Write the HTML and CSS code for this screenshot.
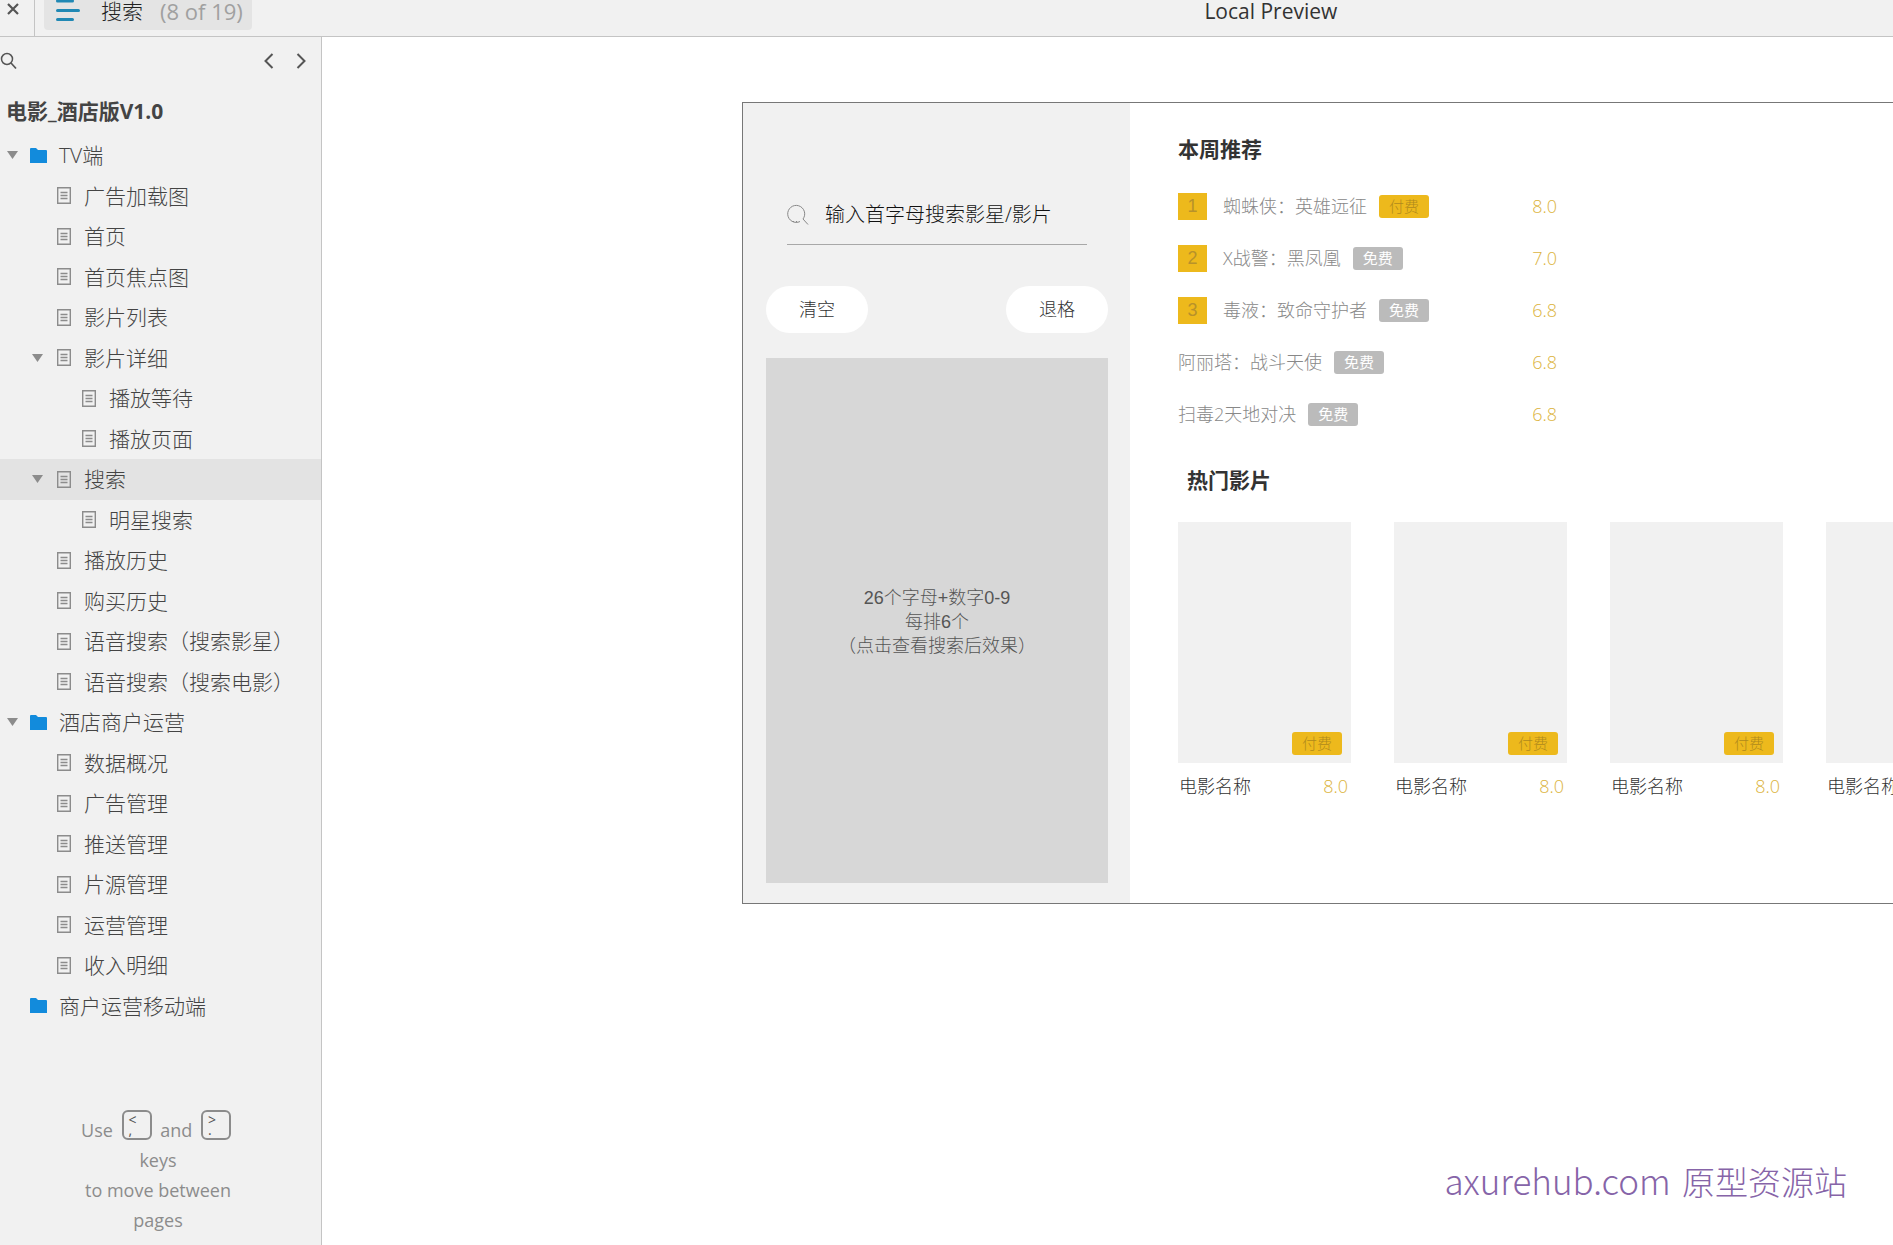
FILE: index.html
```html
<!DOCTYPE html>
<html lang="zh-CN">
<head>
<meta charset="utf-8">
<title>搜索</title>
<link rel="stylesheet" href="styles.css">
</head>
<body>
<svg class="symbols" aria-hidden="true">
  <symbol id="page" viewBox="0 0 14 17"><path d="M.7.7h12.600v15.600H.7zM3.500 5.500h7M3.500 8.500h7M3.500 11.500h7" fill="none" stroke="#8c8c8c" stroke-width="1.400"/></symbol>
  <symbol id="folder" viewBox="0 0 17 15"><path d="M0 1Q0 0 1 0H6l2 2h8Q17 2 17 3V15H0z" fill="#128bdc"/></symbol>
  <symbol id="caret" viewBox="0 0 11 8"><path d="M0 0h11L5.500 8z" fill="#8c8c8c"/></symbol>
</svg>

<header class="topbar">
  <button class="close" aria-label="Close"><svg width="12" height="12" viewBox="0 0 12 12"><path d="M1 1l10 10M11 1L1 11" stroke="#555" stroke-width="2.200"/></svg></button>
  <button class="page-button">
    <svg width="24" height="22" viewBox="0 0 24 22"><path d="M1.500 1h15M1.500 10.500h21M1.500 19.500h15" stroke="#2088b4" stroke-width="3" stroke-linecap="round"/></svg>
    <span>搜索</span><span class="count">(8 of 19)</span>
  </button>
  <h1 class="project">Local Preview</h1>
</header>

<div class="body">
  <aside class="sidebar">
    <div class="tools">
      <button class="tool find" aria-label="Search"><svg width="17" height="18" viewBox="0 0 17 18"><circle cx="7" cy="7" r="5.500" fill="none" stroke="#555" stroke-width="1.500"/><path d="M11 11l5 5.500" stroke="#555" stroke-width="1.700"/></svg></button>
      <button class="tool" aria-label="Previous page"><svg width="10" height="16" viewBox="0 0 10 16"><path d="M8.500 1L1.500 8l7 7" fill="none" stroke="#555" stroke-width="2"/></svg></button>
      <button class="tool" aria-label="Next page"><svg width="10" height="16" viewBox="0 0 10 16"><path d="M1.500 1l7 7-7 7" fill="none" stroke="#555" stroke-width="2"/></svg></button>
    </div>
    <h2 class="tree-title">电影_酒店版V1.0</h2>
    <nav class="tree">
      <a href="#" class="row l0"><svg class="caret"><use href="#caret"/></svg><svg class="folder"><use href="#folder"/></svg>TV端</a>
      <a href="#" class="row l1"><svg class="page"><use href="#page"/></svg>广告加载图</a>
      <a href="#" class="row l1"><svg class="page"><use href="#page"/></svg>首页</a>
      <a href="#" class="row l1"><svg class="page"><use href="#page"/></svg>首页焦点图</a>
      <a href="#" class="row l1"><svg class="page"><use href="#page"/></svg>影片列表</a>
      <a href="#" class="row l1 open"><svg class="caret"><use href="#caret"/></svg><svg class="page"><use href="#page"/></svg>影片详细</a>
      <a href="#" class="row l2"><svg class="page"><use href="#page"/></svg>播放等待</a>
      <a href="#" class="row l2"><svg class="page"><use href="#page"/></svg>播放页面</a>
      <a href="#" class="row l1 open current"><svg class="caret"><use href="#caret"/></svg><svg class="page"><use href="#page"/></svg>搜索</a>
      <a href="#" class="row l2"><svg class="page"><use href="#page"/></svg>明星搜索</a>
      <a href="#" class="row l1"><svg class="page"><use href="#page"/></svg>播放历史</a>
      <a href="#" class="row l1"><svg class="page"><use href="#page"/></svg>购买历史</a>
      <a href="#" class="row l1"><svg class="page"><use href="#page"/></svg>语音搜索（搜索影星）</a>
      <a href="#" class="row l1"><svg class="page"><use href="#page"/></svg>语音搜索（搜索电影）</a>
      <a href="#" class="row l0"><svg class="caret"><use href="#caret"/></svg><svg class="folder"><use href="#folder"/></svg>酒店商户运营</a>
      <a href="#" class="row l1"><svg class="page"><use href="#page"/></svg>数据概况</a>
      <a href="#" class="row l1"><svg class="page"><use href="#page"/></svg>广告管理</a>
      <a href="#" class="row l1"><svg class="page"><use href="#page"/></svg>推送管理</a>
      <a href="#" class="row l1"><svg class="page"><use href="#page"/></svg>片源管理</a>
      <a href="#" class="row l1"><svg class="page"><use href="#page"/></svg>运营管理</a>
      <a href="#" class="row l1"><svg class="page"><use href="#page"/></svg>收入明细</a>
      <a href="#" class="row l0 closed"><svg class="folder"><use href="#folder"/></svg>商户运营移动端</a>
    </nav>
    <p class="hint">Use <kbd><span>&lt;</span><span>,</span></kbd> and <kbd><span>&gt;</span><span>.</span></kbd><br>keys<br>to move between<br>pages</p>
  </aside>

  <main class="canvas">
    <div class="screen">
      <section class="keyboard">
        <label class="search">
          <svg width="22" height="22" viewBox="0 0 22 22"><path d="M13 17.500A8.500 8.500 0 1 1 16 15l5 5.500M6 17.500h1M9 17.500h1" fill="none" stroke="#888" stroke-width="1"/></svg>
          <input type="text" placeholder="输入首字母搜索影星/影片" aria-label="搜索">
        </label>
        <div class="actions"><button class="pill">清空</button><button class="pill">退格</button></div>
        <div class="keys">26个字母+数字0-9<br>每排6个<br>（点击查看搜索后效果）</div>
      </section>
      <section class="content">
        <h2 class="heading">本周推荐</h2>
        <ol class="ranking">
          <li><span class="rank">1</span><span>蜘蛛侠：英雄远征</span><span class="tag paid">付费</span><span class="score">8.0</span></li>
          <li><span class="rank">2</span><span>X战警：黑凤凰</span><span class="tag">免费</span><span class="score">7.0</span></li>
          <li><span class="rank">3</span><span>毒液：致命守护者</span><span class="tag">免费</span><span class="score">6.8</span></li>
          <li><span>阿丽塔：战斗天使</span><span class="tag">免费</span><span class="score">6.8</span></li>
          <li><span>扫毒2天地对决</span><span class="tag">免费</span><span class="score">6.8</span></li>
        </ol>
        <h2 class="heading hot">热门影片</h2>
        <div class="films">
          <article class="film"><div class="poster"><span class="tag paid">付费</span></div><p class="caption"><span>电影名称</span><span class="rating">8.0</span></p></article>
          <article class="film"><div class="poster"><span class="tag paid">付费</span></div><p class="caption"><span>电影名称</span><span class="rating">8.0</span></p></article>
          <article class="film"><div class="poster"><span class="tag paid">付费</span></div><p class="caption"><span>电影名称</span><span class="rating">8.0</span></p></article>
          <article class="film"><div class="poster"></div><p class="caption"><span>电影名称</span></p></article>
        </div>
      </section>
    </div>
    <div class="watermark"><span class="domain">axurehub.com</span> 原型资源站</div>
  </main>
</div>
</body>
</html>
```
FILE: styles.css
```css
* { box-sizing: border-box; }
body {
  margin: 0;
  min-height: 100vh;
  display: flex;
  flex-direction: column;
  background: #fff;
  color: #444;
  font: 300 21px/30px "Open Sans", "Noto Sans CJK SC", sans-serif;
}
h1, h2, p, ol { margin: 0; padding: 0; }
button { border: 0; padding: 0; background: none; color: inherit; font: inherit; }
svg { display: block; flex: none; }
.symbols { position: absolute; width: 0; height: 0; }

/* Top bar */
.topbar {
  display: flex;
  height: 37px;
  background: #f1f1f1;
  border-bottom: 1px solid #c4c4c4;
}
.close {
  width: 35px;
  padding: 3px 0 0 7px;
  border-right: 1px solid #c4c4c4;
  display: flex;
}
.page-button {
  display: flex;
  align-items: flex-start;
  height: 30px;
  margin-left: 9px;
  padding: 0 9px 0 12px;
  border-radius: 0 0 4px 4px;
  background: #e4e4e4;
  color: #222;
  line-height: 23px;
}
.page-button span { margin-left: 21px; }
.page-button .count { margin-left: 17px; color: #a0a0a0; font-size: 22px; font-weight: 400; }
.project {
  flex: 1;
  display: flex;
  color: #333;
  font-size: 21px;
  font-weight: 400;
  line-height: 23px;
  white-space: nowrap;
}
.project::before { content: ""; flex: 12; }
.project::after { content: ""; flex: 7; }

.body { flex: 1; display: flex; }

/* Sidebar */
.sidebar {
  flex: none;
  width: 322px;
  background: #f1f1f1;
  border-right: 1px solid #c4c4c4;
}
.tools {
  display: flex;
  align-items: center;
  gap: 22px;
  height: 48px;
  padding-right: 15px;
}
.find { margin-right: auto; }
.tree-title {
  height: 50px;
  padding: 11px 6px;
  font-size: 21px;
  font-weight: 700;
  line-height: 30px;
}
.tree {
  display: grid;
  grid-auto-rows: 1fr;
  height: 891px;
}
.row {
  display: flex;
  align-items: center;
  color: #444;
  text-decoration: none;
  white-space: nowrap;
}
.l0 { padding-left: 7px; }
.l0.closed { padding-left: 30px; }
.l1 { padding-left: 57px; }
.l1.open { padding-left: 32px; }
.l2 { padding-left: 82px; }
.current { background: #e3e3e3; }
.caret { width: 11px; height: 8px; margin-right: 12px; }
.open .caret { margin-right: 14px; }
.folder { width: 17px; height: 15px; margin-right: 12px; }
.page { width: 14px; height: 17px; margin-right: 13px; }
.hint {
  padding: 84px 5px 8px 0;
  color: #8c8c8c;
  font-size: 18px;
  font-weight: 400;
  line-height: 30px;
  text-align: center;
}
kbd {
  display: inline-flex;
  flex-direction: column;
  width: 30px;
  height: 30px;
  margin: 0 4px;
  padding: 3px 5px;
  border: 2px solid #8c8c8c;
  border-radius: 6px;
  color: #555;
  font: 400 14px/10px "Open Sans", sans-serif;
  text-align: left;
  vertical-align: 12px;
}

/* Prototype canvas */
.canvas {
  position: relative;
  flex: 1;
  min-width: 0;
  overflow: hidden;
  padding: 65px 0 0 420px;
}
.screen {
  display: flex;
  width: 1540px;
  height: 802px;
  border: 1px solid #777;
}
.keyboard {
  flex: none;
  display: flex;
  flex-direction: column;
  width: 387px;
  padding: 82px 22px 20px 23px;
  background: #f1f1f1;
}
.search {
  display: flex;
  align-items: center;
  gap: 16px;
  height: 60px;
  margin: 0 21px;
  border-bottom: 1px solid #a8a8a8;
}
.search input {
  flex: 1;
  min-width: 0;
  padding: 0;
  border: 0;
  outline: 0;
  background: none;
  font: inherit;
  font-size: 20px;
  color: #111;
}
.search input::placeholder { color: #111; opacity: 1; }
.actions {
  display: flex;
  justify-content: space-between;
  margin: 41px 0 25px;
}
.pill {
  width: 102px;
  height: 47px;
  border-radius: 24px;
  background: #fff;
  color: #333;
  font-size: 18px;
  line-height: 47px;
}
.keys {
  flex: 1;
  display: grid;
  place-content: center;
  padding-top: 3px;
  background: #d7d7d7;
  color: #555;
  font: 300 18px/24px "Liberation Sans", "Noto Sans CJK SC", sans-serif;
  text-align: center;
}
.content { flex: none; padding: 31px 0 0 48px; }
.heading { color: #333; font-size: 21px; font-weight: 700; }
.ranking {
  width: 379px;
  margin-top: 16px;
  list-style: none;
  color: #888;
  font-size: 18px;
}
.ranking li { display: flex; align-items: center; height: 52px; }
.rank {
  width: 29px;
  height: 27px;
  margin-right: 16px;
  background: #edb91c;
  color: #b8922a;
  font: 400 18px/27px "Liberation Sans", sans-serif;
  text-align: center;
}
.tag {
  width: 50px;
  height: 23px;
  margin-left: 12px;
  border-radius: 3px;
  background: #bbb;
  color: #fff;
  font-size: 15px;
  font-weight: 400;
  line-height: 23px;
  text-align: center;
}
.paid { background: #edb91c; color: #b08a1c; font-weight: 300; }
.score { margin-left: auto; color: #dcb440; }
.hot { margin: 25px 0 0 9px; }
.films { display: flex; gap: 43px; margin-top: 27px; }
.film { width: 173px; }
.poster {
  display: flex;
  align-items: flex-end;
  justify-content: flex-end;
  height: 241px;
  padding: 8px 9px;
  background: #f1f1f1;
}
.caption {
  display: flex;
  justify-content: space-between;
  padding: 8px 3px 0 1px;
  color: #333;
  font-size: 18px;
}
.rating { color: #dcb440; }
.watermark {
  position: absolute;
  right: 46px;
  bottom: 40px;
  color: #8664a8;
  font: 300 33px/48px "Noto Sans CJK SC", sans-serif;
  white-space: nowrap;
}
.domain { margin-right: 4px; font-size: 35px; }
```
